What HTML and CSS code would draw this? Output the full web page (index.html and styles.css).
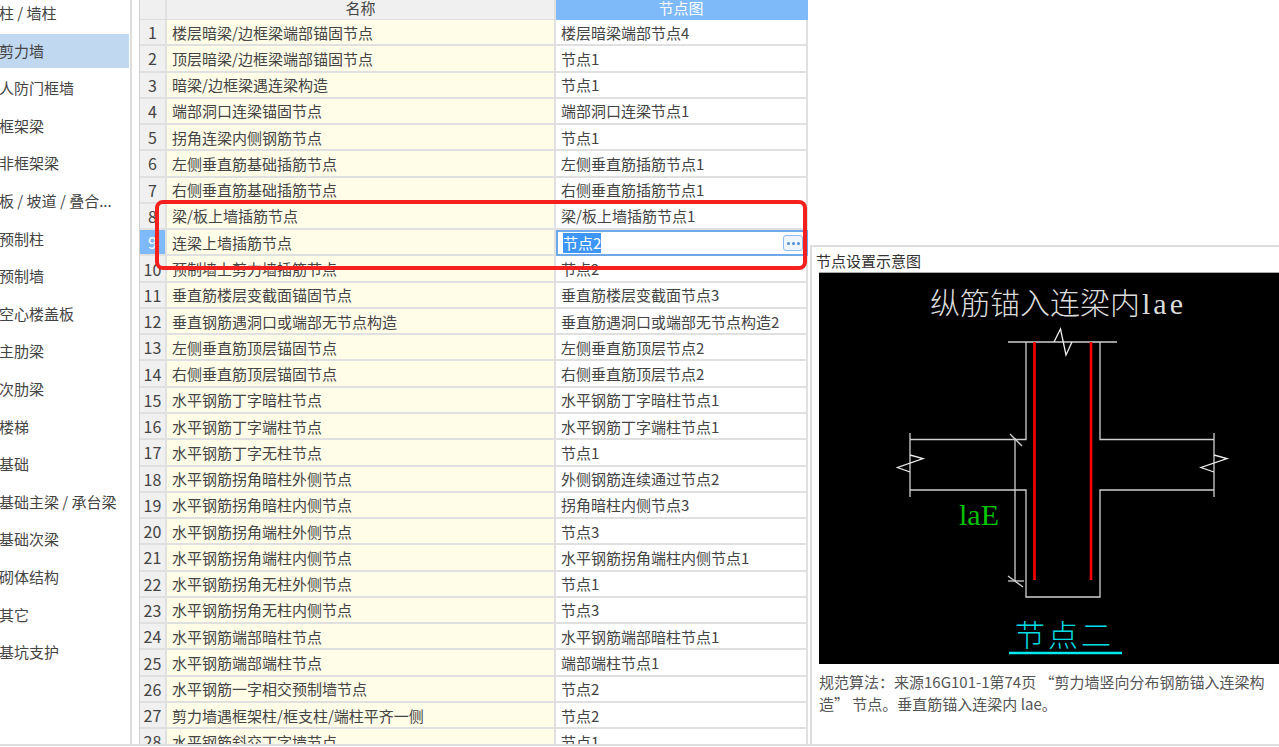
FILE: index.html
```html
<!DOCTYPE html>
<html lang="zh-CN">
<head>
  <meta charset="UTF-8">
  <title>节点设置</title>
  <link rel="stylesheet" href="styles.css">
</head>
<body>
  <div class="app">
    <!-- 左侧构件列表 -->
    <ul class="side">
      <li>柱 / 墙柱</li>
      <li class="on">剪力墙</li>
      <li>人防门框墙</li>
      <li>框架梁</li>
      <li>非框架梁</li>
      <li>板 / 坡道 / 叠合...</li>
      <li>预制柱</li>
      <li>预制墙</li>
      <li>空心楼盖板</li>
      <li>主肋梁</li>
      <li>次肋梁</li>
      <li>楼梯</li>
      <li>基础</li>
      <li>基础主梁 / 承台梁</li>
      <li>基础次梁</li>
      <li>砌体结构</li>
      <li>其它</li>
      <li>基坑支护</li>
    </ul>

    <!-- 节点表格 -->
    <div class="grid">
      <div class="row head"><div class="num"></div><div class="name">名称</div><div class="node">节点图</div></div>
      <div class="row"><div class="num">1</div><div class="name">楼层暗梁/边框梁端部锚固节点</div><div class="node">楼层暗梁端部节点4</div></div>
      <div class="row"><div class="num">2</div><div class="name">顶层暗梁/边框梁端部锚固节点</div><div class="node">节点1</div></div>
      <div class="row"><div class="num">3</div><div class="name">暗梁/边框梁遇连梁构造</div><div class="node">节点1</div></div>
      <div class="row"><div class="num">4</div><div class="name">端部洞口连梁锚固节点</div><div class="node">端部洞口连梁节点1</div></div>
      <div class="row"><div class="num">5</div><div class="name">拐角连梁内侧钢筋节点</div><div class="node">节点1</div></div>
      <div class="row"><div class="num">6</div><div class="name">左侧垂直筋基础插筋节点</div><div class="node">左侧垂直筋插筋节点1</div></div>
      <div class="row"><div class="num">7</div><div class="name">右侧垂直筋基础插筋节点</div><div class="node">右侧垂直筋插筋节点1</div></div>
      <div class="row"><div class="num">8</div><div class="name">梁/板上墙插筋节点</div><div class="node">梁/板上墙插筋节点1</div></div>
      <div class="row current">
        <div class="num">9</div>
        <div class="name">连梁上墙插筋节点</div>
        <div class="node edit"><span class="sel">节点2</span><span class="more"><i></i><i></i><i></i></span></div>
      </div>
      <div class="row"><div class="num">10</div><div class="name">预制墙上剪力墙插筋节点</div><div class="node">节点2</div></div>
      <div class="row"><div class="num">11</div><div class="name">垂直筋楼层变截面锚固节点</div><div class="node">垂直筋楼层变截面节点3</div></div>
      <div class="row"><div class="num">12</div><div class="name">垂直钢筋遇洞口或端部无节点构造</div><div class="node">垂直筋遇洞口或端部无节点构造2</div></div>
      <div class="row"><div class="num">13</div><div class="name">左侧垂直筋顶层锚固节点</div><div class="node">左侧垂直筋顶层节点2</div></div>
      <div class="row"><div class="num">14</div><div class="name">右侧垂直筋顶层锚固节点</div><div class="node">右侧垂直筋顶层节点2</div></div>
      <div class="row"><div class="num">15</div><div class="name">水平钢筋丁字暗柱节点</div><div class="node">水平钢筋丁字暗柱节点1</div></div>
      <div class="row"><div class="num">16</div><div class="name">水平钢筋丁字端柱节点</div><div class="node">水平钢筋丁字端柱节点1</div></div>
      <div class="row"><div class="num">17</div><div class="name">水平钢筋丁字无柱节点</div><div class="node">节点1</div></div>
      <div class="row"><div class="num">18</div><div class="name">水平钢筋拐角暗柱外侧节点</div><div class="node">外侧钢筋连续通过节点2</div></div>
      <div class="row"><div class="num">19</div><div class="name">水平钢筋拐角暗柱内侧节点</div><div class="node">拐角暗柱内侧节点3</div></div>
      <div class="row"><div class="num">20</div><div class="name">水平钢筋拐角端柱外侧节点</div><div class="node">节点3</div></div>
      <div class="row"><div class="num">21</div><div class="name">水平钢筋拐角端柱内侧节点</div><div class="node">水平钢筋拐角端柱内侧节点1</div></div>
      <div class="row"><div class="num">22</div><div class="name">水平钢筋拐角无柱外侧节点</div><div class="node">节点1</div></div>
      <div class="row"><div class="num">23</div><div class="name">水平钢筋拐角无柱内侧节点</div><div class="node">节点3</div></div>
      <div class="row"><div class="num">24</div><div class="name">水平钢筋端部暗柱节点</div><div class="node">水平钢筋端部暗柱节点1</div></div>
      <div class="row"><div class="num">25</div><div class="name">水平钢筋端部端柱节点</div><div class="node">端部端柱节点1</div></div>
      <div class="row"><div class="num">26</div><div class="name">水平钢筋一字相交预制墙节点</div><div class="node">节点2</div></div>
      <div class="row"><div class="num">27</div><div class="name">剪力墙遇框架柱/框支柱/端柱平齐一侧</div><div class="node">节点2</div></div>
      <div class="row"><div class="num">28</div><div class="name">水平钢筋斜交丁字墙节点</div><div class="node">节点1</div></div>

      <!-- 红框标注 -->
      <div class="mark"></div>
    </div>

    <!-- 右侧示意图 -->
    <div class="preview">
      <div class="preview-title">节点设置示意图</div>
      <svg class="drawing" viewBox="819 273 460 391" width="460" height="391">
        <rect x="819" y="273" width="460" height="391" fill="#000"/>
        <text class="t-title" x="930" y="314">纵筋锚入连梁内<tspan class="latin" dx="2">lae</tspan></text>

        <g fill="none" stroke="#d0d0d0" stroke-width="1.3">
          <path d="M1008 342H1117"/>
          <path d="M910 439.5H1026V342"/>
          <path d="M1100 342V439.5H1214"/>
          <path d="M910 490H1026V597H1100V490H1214"/>
          <path d="M910 433V497"/>
          <path d="M1214 433V497"/>
          <path d="M1015 438V581"/>
          <path d="M1008 581H1024"/>
          <path d="M1010 434L1022 446"/>
          <path d="M1008 576L1023 587"/>
          <path stroke="#eee" d="M1054 342L1060.5 329L1066 355L1072 342"/>
          <path stroke="#eee" d="M910 455L923 458.5L897.5 467.5L910 472"/>
          <path stroke="#eee" d="M1214 455L1227 458.5L1201 467.5L1214 472"/>
        </g>

        <path d="M1034.5 342V580M1091 342V580" stroke="#f00" stroke-width="2.6" fill="none"/>

        <text class="t-lae" x="959" y="525">laE</text>
        <text class="t-node" x="1015" y="646">节点二</text>
        <path d="M1009 653H1122" stroke="#00e8f0" stroke-width="2.6"/>
      </svg>
      <p class="caption">规范算法：来源16G101-1第74页 “剪力墙竖向分布钢筋锚入连梁构造” 节点。垂直筋锚入连梁内 lae。</p>
    </div>
  </div>
</body>
</html>
```

FILE: styles.css
```css
* {
  box-sizing: border-box;
}

body {
  margin: 0;
  background-color: #fff;
  color: #444;
  font-family: "Noto Sans CJK SC", "Liberation Sans", sans-serif;
  font-size: 15px;
  overflow: hidden;
}

.app {
  display: flex;
  height: 746px;
  border-bottom: 2px solid #ddd;
  overflow: hidden;
}

/* 左侧列表 */
.side {
  width: 132px;
  flex: none;
  margin: -4px 0 0;
  padding: 0 1px 0 0;
  list-style: none;
  border-right: 2px solid #ddd;
}

.side li {
  height: 34px;
  margin-bottom: 3.6px;
  line-height: 34px;
  margin-left: -1px;
  padding-left: 0;
  white-space: nowrap;
}

.side li.on {
  background-color: #c0d8f0;
}

/* 表格 */
.grid {
  position: relative;
  width: 669px;
  flex: none;
  margin-left: 7px;
  border-left: 1px solid #d0d0d0;
}

.row {
  display: grid;
  grid-template-columns: 27px 389px 252px;
  height: 26.27px;
}

.row > div {
  display: flex;
  align-items: center;
  border-bottom: 2px solid #e0e0e0;
  border-right: 2px solid #e0e0e0;
  white-space: nowrap;
  overflow: hidden;
}

.row .num {
  justify-content: center;
  background-color: #f0f0f0;
  font-size: 16px;
}

.row .name {
  padding-left: 5px;
  background-color: #fffce8;
}

.row .node {
  padding-left: 5px;
}

.row.head {
  height: 20px;
}

.row.head > div {
  justify-content: center;
  padding: 0 0 4px;
  line-height: 15px;
  overflow: visible;
  background-color: #f0f0f0;
  border-bottom-width: 1px;
  border-bottom-color: #ddd;
}

.row.head .node {
  background-color: #7eb9f9;
  color: #fff;
  border-color: #7eb9f9;
}

.row.current .num {
  background-color: #7eb9f9;
  color: #fff;
}

.row.current .edit {
  border: 2px solid #6fa8e8;
  padding: 0 3px 0 5px;
}

.sel {
  background-color: #3d96f5;
  color: #fff;
  line-height: 20px;
}

.more {
  display: flex;
  align-items: center;
  justify-content: center;
  gap: 2px;
  width: 20px;
  height: 16px;
  margin-left: auto;
  border: 1px solid #8fbcec;
  border-radius: 3px;
  background-color: #eef5fd;
}

.more i {
  width: 3px;
  height: 3px;
  border-radius: 50%;
  background-color: #4f8fd8;
}

.mark {
  position: absolute;
  left: 15px;
  top: 200px;
  width: 652px;
  height: 70px;
  border: 4px solid #f5201e;
  border-radius: 8px;
  pointer-events: none;
}

/* 右侧示意图 */
.preview {
  flex: 1;
  min-width: 0;
  margin: 245px 0 0 2px;
  padding-left: 4px;
  border-top: 2px solid #ddd;
  border-left: 2px solid #ddd;
}

.preview-title {
  height: 25px;
  padding-left: 0;
  line-height: 28px;
  color: #333;
}

.drawing {
  display: block;
  margin-left: 3px;
  border-top: 1px solid #aaa;
  box-sizing: content-box;
}

.t-title {
  fill: #dcdcdc;
  font-size: 30px;
  font-weight: 300;
}

.latin {
  font-family: "Liberation Serif", serif;
  letter-spacing: 3px;
}

.t-lae {
  fill: #00c400;
  font-family: "Liberation Serif", serif;
  font-size: 30px;
}

.t-node {
  fill: #00dce4;
  font-size: 30px;
  font-weight: 300;
  letter-spacing: 3px;
}

.caption {
  margin: 7px 10px 0 3px;
  line-height: 22px;
  color: #555;
}
```
